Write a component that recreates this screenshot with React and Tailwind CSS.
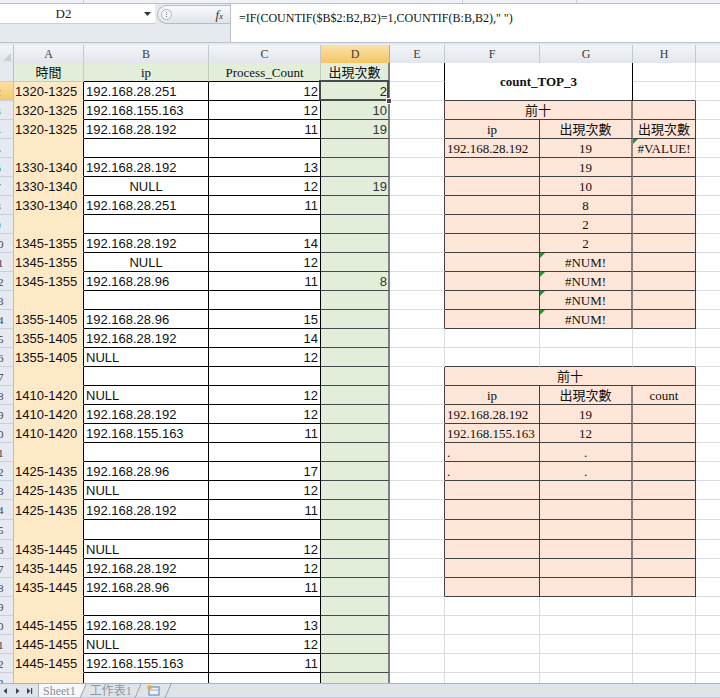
import React from 'react';

const SANS = "font-['Liberation_Sans','Noto_Sans_CJK_TC',sans-serif]";
const SERIF = "font-['Liberation_Serif','Noto_Sans_CJK_TC',serif]";
const COLS = "grid grid-cols-[14px_70px_125px_112px_69px_55px_95px_93px_63px_100px]";
const BASE = "relative flex items-center overflow-hidden whitespace-nowrap pt-[2px] text-[13px] text-[#111]";
const GRIDCELL = "bg-white border-r border-b border-r-[#dadcdd] border-b-[#dadcdd]";
const PEACH = "bg-[#fde6d8] border-r border-b border-r-[#404040] border-b-[#404040]";
const PEACH_G = "bg-[#fde6d8] border-r-2 border-b border-r-[#8c8580] border-b-[#404040]";

const LEFT = {
  2: ['1320-1325', '192.168.28.251', '12', '2'],
  3: ['1320-1325', '192.168.155.163', '12', '10'],
  4: ['1320-1325', '192.168.28.192', '11', '19'],
  6: ['1330-1340', '192.168.28.192', '13', ''],
  7: ['1330-1340', 'NULL', '12', '19'],
  8: ['1330-1340', '192.168.28.251', '11', ''],
  10: ['1345-1355', '192.168.28.192', '14', ''],
  11: ['1345-1355', 'NULL', '12', ''],
  12: ['1345-1355', '192.168.28.96', '11', '8'],
  14: ['1355-1405', '192.168.28.96', '15', ''],
  15: ['1355-1405', '192.168.28.192', '14', ''],
  16: ['1355-1405', 'NULL', '12', ''],
  18: ['1410-1420', 'NULL', '12', ''],
  19: ['1410-1420', '192.168.28.192', '12', ''],
  20: ['1410-1420', '192.168.155.163', '11', ''],
  22: ['1425-1435', '192.168.28.96', '17', ''],
  23: ['1425-1435', 'NULL', '12', ''],
  24: ['1425-1435', '192.168.28.192', '11', ''],
  26: ['1435-1445', 'NULL', '12', ''],
  27: ['1435-1445', '192.168.28.192', '12', ''],
  28: ['1435-1445', '192.168.28.96', '11', ''],
  30: ['1445-1455', '192.168.28.192', '13', ''],
  31: ['1445-1455', 'NULL', '12', ''],
  32: ['1445-1455', '192.168.155.163', '11', ''],
};

const T1 = {
  4: ['ip', '出現次數', '出現次數'],
  5: ['192.168.28.192', '19', '#VALUE!'],
  6: ['', '19', ''],
  7: ['', '10', ''],
  8: ['', '8', ''],
  9: ['', '2', ''],
  10: ['', '2', ''],
  11: ['', '#NUM!', ''],
  12: ['', '#NUM!', ''],
  13: ['', '#NUM!', ''],
  14: ['', '#NUM!', ''],
};

const T2 = {
  18: ['ip', '出現次數', 'count'],
  19: ['192.168.28.192', '19', ''],
  20: ['192.168.155.163', '12', ''],
  21: ['.', '.', ''],
  22: ['.', '.', ''],
};

const Tri = () => (
  <span className="absolute left-0 top-0 w-0 h-0 border-t-[5px] border-t-[#1f9a2f] border-r-[5px] border-r-transparent" />
);

function rowCells(r) {
  const out = [];
  out.push(
    <div
      key={`rh${r}`}
      className={`${r === 2 ? 'bg-linear-to-b from-[#fae0a4] to-[#f3c870]' : 'bg-[#e6eaf0]'} flex items-center justify-end overflow-hidden pt-[2px] border-r border-b border-r-[#b8c0cb] border-b-[#c9cfd8] ${SERIF} text-[11px] text-[#3d3d3d]`}
    >
      <span className="w-[30px] shrink-0 text-center">{r}</span>
    </div>
  );

  if (r === 1) {
    out.push(
      <div key="a1" className={`${BASE} ${SERIF} justify-center bg-[#e2eeda] border-r border-b border-r-[#c4cdbb] border-b-[#c4cdbb]`}>時間</div>,
      <div key="b1" className={`${BASE} ${SERIF} justify-center bg-[#e2eeda] border-r border-b border-r-[#c4cdbb] border-b-black`}>ip</div>,
      <div key="c1" className={`${BASE} ${SERIF} text-[12px] justify-center bg-[#e2eeda] border-r border-b border-r-[#c4cdbb] border-b-black`}>Process_Count</div>,
      <div key="d1" className={`${BASE} ${SERIF} justify-center bg-[#e2eeda] border-r-2 border-b border-r-[#808080] border-b-[#5a5a5a]`}>出現次數</div>
    );
  } else {
    const d = LEFT[r] || ['', '', '', ''];
    const centerB = r === 7 || r === 11;
    out.push(
      <div key={`a${r}`} className={`${BASE} ${SANS} pl-[1px] bg-[#fde9c6] border-r border-b border-r-black border-b-[#fde9c6]`}>{d[0]}</div>,
      <div key={`b${r}`} className={`${BASE} ${SANS} ${centerB ? 'justify-center' : 'pl-[2px]'} bg-white border-r border-b border-r-black border-b-black`}>{d[1]}</div>,
      <div key={`c${r}`} className={`${BASE} ${SANS} justify-end pr-[2px] bg-white border-r border-b border-r-black border-b-black`}>{d[2]}</div>
    );
    if (r === 2) {
      out.push(
        <div key="d2" className={`relative z-10 flex items-center justify-end pt-[2px] pr-[1px] text-[13px] text-[#222] ${SANS} bg-[#e2eeda] border-r-2 border-b border-r-[#808080] border-b-[#5a5a5a]`}>
          {d[3]}
          <div className="absolute top-[-2px] left-[-2px] right-[-1px] bottom-[-1px] border-2 border-[#4a4a4a] pointer-events-none" />
          <div className="absolute right-[-4px] bottom-[-4px] w-[6px] h-[6px] bg-[#4a4a4a] border border-white" />
        </div>
      );
    } else {
      out.push(
        <div key={`d${r}`} className={`${BASE} ${SANS} text-[#333] justify-end pr-[1px] bg-[#e2eeda] border-r-2 border-b border-r-[#808080] border-b-[#4a4a4a]`}>{d[3]}</div>
      );
    }
  }

  let eCls = GRIDCELL;
  if (r <= 2) eCls = 'bg-white border-r border-b border-r-black border-b-[#dadcdd]';
  else if ((r >= 3 && r <= 14) || (r >= 17 && r <= 28)) eCls = 'bg-white border-r border-b border-r-[#404040] border-b-[#dadcdd]';
  out.push(<div key={`e${r}`} className={eCls} />);

  if (r === 1) {
    out.push(
      <div key="f1" className={`col-span-2 row-span-2 flex items-center justify-center pt-[1px] bg-white border-r border-b border-r-black border-b-[#404040] ${SERIF} font-bold text-[13px] text-[#111]`}>count_TOP_3</div>,
      <div key="h1" className={GRIDCELL} />
    );
  } else if (r === 2) {
    out.push(<div key="h2" className="bg-white border-r border-b border-r-[#dadcdd] border-b-[#404040]" />);
  } else if (r === 3) {
    out.push(
      <div key="f3" className={`col-span-2 ${BASE} ${SERIF} justify-center ${PEACH_G}`}>前十</div>,
      <div key="h3" className={PEACH} />
    );
  } else if (r === 17) {
    out.push(
      <div key="f17" className={`col-span-3 ${BASE} ${SERIF} justify-center ${PEACH}`}>前十</div>
    );
  } else if ((r >= 4 && r <= 14) || (r >= 18 && r <= 28)) {
    const t = (r <= 14 ? T1[r] : T2[r]) || ['', '', ''];
    const header = r === 4 || r === 18;
    out.push(
      <div key={`f${r}`} className={`${BASE} ${SERIF} ${header ? 'justify-center' : 'pl-[2px]'} ${PEACH}`}>{t[0]}</div>,
      <div key={`g${r}`} className={`${BASE} ${SERIF} justify-center ${PEACH_G}`}>
        {r >= 11 && r <= 14 && <Tri />}
        {t[1]}
      </div>,
      <div key={`h${r}`} className={`${BASE} ${SERIF} justify-center ${PEACH}`}>
        {r === 5 && <Tri />}
        {t[2]}
      </div>
    );
  } else if (r === 16) {
    const c16 = 'bg-white border-r border-b border-r-[#dadcdd] border-b-[#404040]';
    out.push(<div key="f16" className={c16} />, <div key="g16" className={c16} />, <div key="h16" className={c16} />);
  } else {
    out.push(<div key={`f${r}`} className={GRIDCELL} />, <div key={`g${r}`} className={GRIDCELL} />, <div key={`h${r}`} className={GRIDCELL} />);
  }

  out.push(<div key={`i${r}`} className={GRIDCELL} />);
  return out;
}

function ColHeader() {
  const letters = ['A', 'B', 'C', 'D', 'E', 'F', 'G', 'H', 'I'];
  return (
    <div className={`${COLS} h-[18px]`}>
      <div className="relative bg-linear-to-b from-[#f2f4f7] to-[#e1e6ec] border-r border-b border-r-[#b8c0cb] border-b-[#9aa3ae]">
        <div className="absolute right-[2px] bottom-[2px] w-0 h-0 border-b-[8px] border-b-[#c9cfd7] border-l-[8px] border-l-transparent" />
      </div>
      {letters.map((l) => (
        <div
          key={l}
          className={`flex items-center justify-center border-r border-b ${SERIF} text-[12px] text-[#3b3b3b] ${
            l === 'D'
              ? 'bg-linear-to-b from-[#fbe3a6] to-[#f3c565] border-r-[#d9a84a] border-b-[#e0a43a]'
              : 'bg-linear-to-b from-[#f3f5f8] to-[#e2e6ec] border-r-[#c3c9d1] border-b-[#9aa3ae]'
          }`}
        >
          {l}
        </div>
      ))}
    </div>
  );
}

function FormulaArea() {
  return (
    <div className="flex flex-col bg-[#e6eaef]">
      <div className="h-[4px] flex bg-[#eef1f5] border-b border-b-[#b8c0cb]">
        <div className="w-[84px] border-r border-r-[#c8ced6]" />
        <div className="w-[379px] border-r border-r-[#c8ced6]" />
        <div className="w-[114px] border-r border-r-[#c8ced6]" />
      </div>
      <div className="h-[38px] flex">
        <div className="w-[230px] flex flex-col">
          <div className="h-[20px] flex">
            <div className="w-[155px] bg-white flex items-center border-b border-b-[#c9d0d8]">
              <div className={`w-[127px] text-center ${SERIF} text-[13px] text-[#222]`}>D2</div>
              <div className="flex-1 flex justify-end pr-[4px]">
                <svg width="7" height="4" viewBox="0 0 7 4"><path d="M0 0h7L3.5 4z" fill="#333" /></svg>
              </div>
            </div>
            <div className="flex-1 flex items-center pl-[2px]">
              <div className="h-[19px] flex-1 flex items-center rounded-l-full border border-r-0 border-[#b3bcc7] bg-linear-to-b from-[#f8f9fb] to-[#dfe4ea]">
                <div className="ml-[3px] w-[11px] h-[11px] rounded-full border border-[#b0b8c3] bg-[#f3f5f8] flex items-center justify-center">
                  <div className="flex flex-col gap-[1px]">
                    <div className="w-[1px] h-[1px] bg-[#7a8594]" />
                    <div className="w-[1px] h-[1px] bg-[#7a8594]" />
                    <div className="w-[1px] h-[1px] bg-[#7a8594]" />
                  </div>
                </div>
                <div className="flex-1" />
                <div className={`mr-[7px] italic ${SERIF} text-[13px] text-[#333] leading-none`}>
                  f<span className="text-[9px]">x</span>
                </div>
              </div>
            </div>
          </div>
          <div className="flex-1 bg-[#e6eaef]" />
        </div>
        <div className="flex-1 bg-white border-l border-l-[#b8c0cb]">
          <div className={`pl-[8px] pt-[5px] ${SERIF} text-[12px] text-[#111] whitespace-pre`}>
            {'=IF(COUNTIF($B$2:B2,B2)=1,COUNTIF(B:B,B2)," ")'}
          </div>
        </div>
      </div>
      <div className="h-[3px] bg-[#e6eaef] border-t border-t-[#b8c0cb]" />
    </div>
  );
}

function TabBar() {
  return (
    <div className="h-[15px] flex items-stretch bg-[#dfe4eb] border-t border-t-[#a8b1be] border-b border-b-[#c2c9d3]">
      <div className="w-[38px] flex items-center pl-[3px]">
        <svg width="32" height="8" viewBox="0 0 32 8">
          <path d="M4 1L0.5 4 4 7z" fill="#3c4654" />
          <path d="M13 1L16.5 4 13 7z" fill="#3c4654" />
          <path d="M24 1L27.5 4 24 7z" fill="#3c4654" />
          <rect x="28" y="1" width="1.2" height="6" fill="#3c4654" />
        </svg>
      </div>
      <div className={`relative flex items-center px-[4px] bg-[#f7f8fa] border-l border-l-[#a8b1be] ${SERIF} text-[12px] text-[#8a8f96] leading-none`}>
        Sheet1
      </div>
      <svg width="8" height="14" viewBox="0 0 8 14" className="shrink-0">
        <path d="M0 0 L0 14 L6 0z" fill="#f7f8fa" />
        <path d="M6 0 L0 14" stroke="#9aa4b1" strokeWidth="1" />
      </svg>
      <div className={`flex items-center px-[2px] ${SERIF} text-[12px] text-[#9298a0] leading-none`}>工作表1</div>
      <svg width="8" height="14" viewBox="0 0 8 14" className="shrink-0">
        <path d="M7 0 L1 14" stroke="#9aa4b1" strokeWidth="1" />
      </svg>
      <div className="flex items-center px-[4px]">
        <svg width="14" height="11" viewBox="0 0 14 11">
          <rect x="3" y="2" width="10" height="8" fill="#eef3fa" stroke="#5a7fb0" strokeWidth="1" />
          <path d="M3 5h10" stroke="#8fb0d8" strokeWidth="1" />
          <circle cx="3.5" cy="2.5" r="2.2" fill="#f2a630" />
        </svg>
      </div>
      <svg width="8" height="14" viewBox="0 0 8 14" className="shrink-0">
        <path d="M7 0 L1 14" stroke="#9aa4b1" strokeWidth="1" />
      </svg>
      <div className="flex-1" />
    </div>
  );
}

export default function App() {
  const rows = [];
  for (let r = 1; r <= 33; r++) rows.push(...rowCells(r));
  return (
    <div className={`w-[720px] h-[698px] overflow-hidden flex flex-col bg-white ${SANS}`}>
      <FormulaArea />
      <div className="overflow-hidden">
        <ColHeader />
      </div>
      <div className="h-[620px] overflow-hidden">
        <div className={`${COLS} grid-rows-[repeat(23,19px)_20px_20px_repeat(8,19px)]`}>{rows}</div>
      </div>
      <TabBar />
    </div>
  );
}
